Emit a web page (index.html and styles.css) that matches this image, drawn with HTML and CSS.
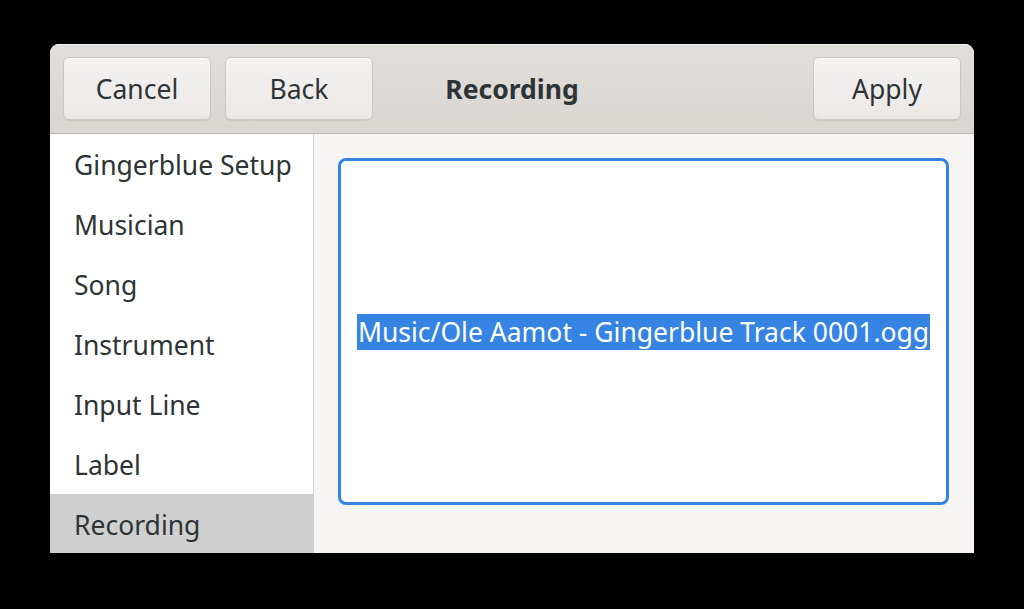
FILE: index.html
```html
<!DOCTYPE html>
<html>
<head>
<meta charset="utf-8">
<link rel="stylesheet" href="styles.css">
</head>
<body>
<div class="window">
  <header class="headerbar">
    <div class="hb-start">
      <button class="btn">Cancel</button>
      <button class="btn">Back</button>
    </div>
    <div class="title">Recording</div>
    <div class="hb-end">
      <button class="btn">Apply</button>
    </div>
  </header>
  <div class="body">
    <nav class="sidebar">
      <div class="row">Gingerblue Setup</div>
      <div class="row">Musician</div>
      <div class="row">Song</div>
      <div class="row">Instrument</div>
      <div class="row">Input Line</div>
      <div class="row">Label</div>
      <div class="row selected">Recording</div>
    </nav>
    <main class="content">
      <div class="entry">
        <span class="sel">Music/Ole Aamot - Gingerblue Track 0001.ogg</span>
      </div>
    </main>
  </div>
</div>
</body>
</html>
```
FILE: styles.css
```css
html, body {
  margin: 0;
  padding: 0;
  background: #000;
  width: 1024px;
  height: 609px;
  overflow: hidden;
}
body {
  font-family: "Noto Sans", "Open Sans", sans-serif;
  color: #2e3436;
}
.window {
  margin: 44px 0 0 50px;
  width: 924px;
  height: 509px;
  display: flex;
  flex-direction: column;
  border-radius: 9px 9px 0 0;
  overflow: hidden;
  background: #f6f5f4;
}
.headerbar {
  height: 89px;
  flex: none;
  border-bottom: 1px solid #bfb8b1;
  background: linear-gradient(#e1dedb, #dad6d2);
  display: flex;
  align-items: center;
  justify-content: space-between;
  padding: 0 13px;
  position: relative;
  box-shadow: inset 0 1px #f2f0ee;
}
.hb-start, .hb-end {
  display: flex;
  gap: 14px;
}
.btn {
  width: 148px;
  height: 63px;
  border: 1px solid #cdc7c2;
  border-radius: 6px;
  background: linear-gradient(#f4f2f1, #ebe8e6);
  box-shadow: 0 1px 1px rgba(0,0,0,0.07), inset 0 1px #fff;
  font-family: inherit;
  font-size: 26.5px;
  color: #2e3436;
  padding: 0;
}
.title {
  position: absolute;
  left: 0;
  right: 0;
  text-align: center;
  font-weight: bold;
  font-size: 26.5px;
  pointer-events: none;
}
.body {
  flex: 1;
  display: flex;
  min-height: 0;
}
.sidebar {
  width: 263px;
  flex: none;
  background: #fff;
  border-right: 1px solid #d5d0cc;
  display: flex;
  flex-direction: column;
}
.row {
  height: 60px;
  flex: none;
  display: flex;
  align-items: center;
  padding: 2px 0 0 24px;
  box-sizing: border-box;
  font-size: 26.5px;
}
.row.selected {
  background: #cfcfcf;
}
.content {
  flex: 1;
  padding: 24px 25px 48px 24px;
  display: flex;
}
.entry {
  flex: 1;
  background: #fff;
  border: 3px solid #3584e4;
  border-radius: 8px;
  display: flex;
  align-items: center;
  justify-content: center;
}
.sel {
  background: #3584e4;
  color: #fff;
  font-size: 26.5px;
  line-height: 36px;
  padding: 0 1px;
}
```
